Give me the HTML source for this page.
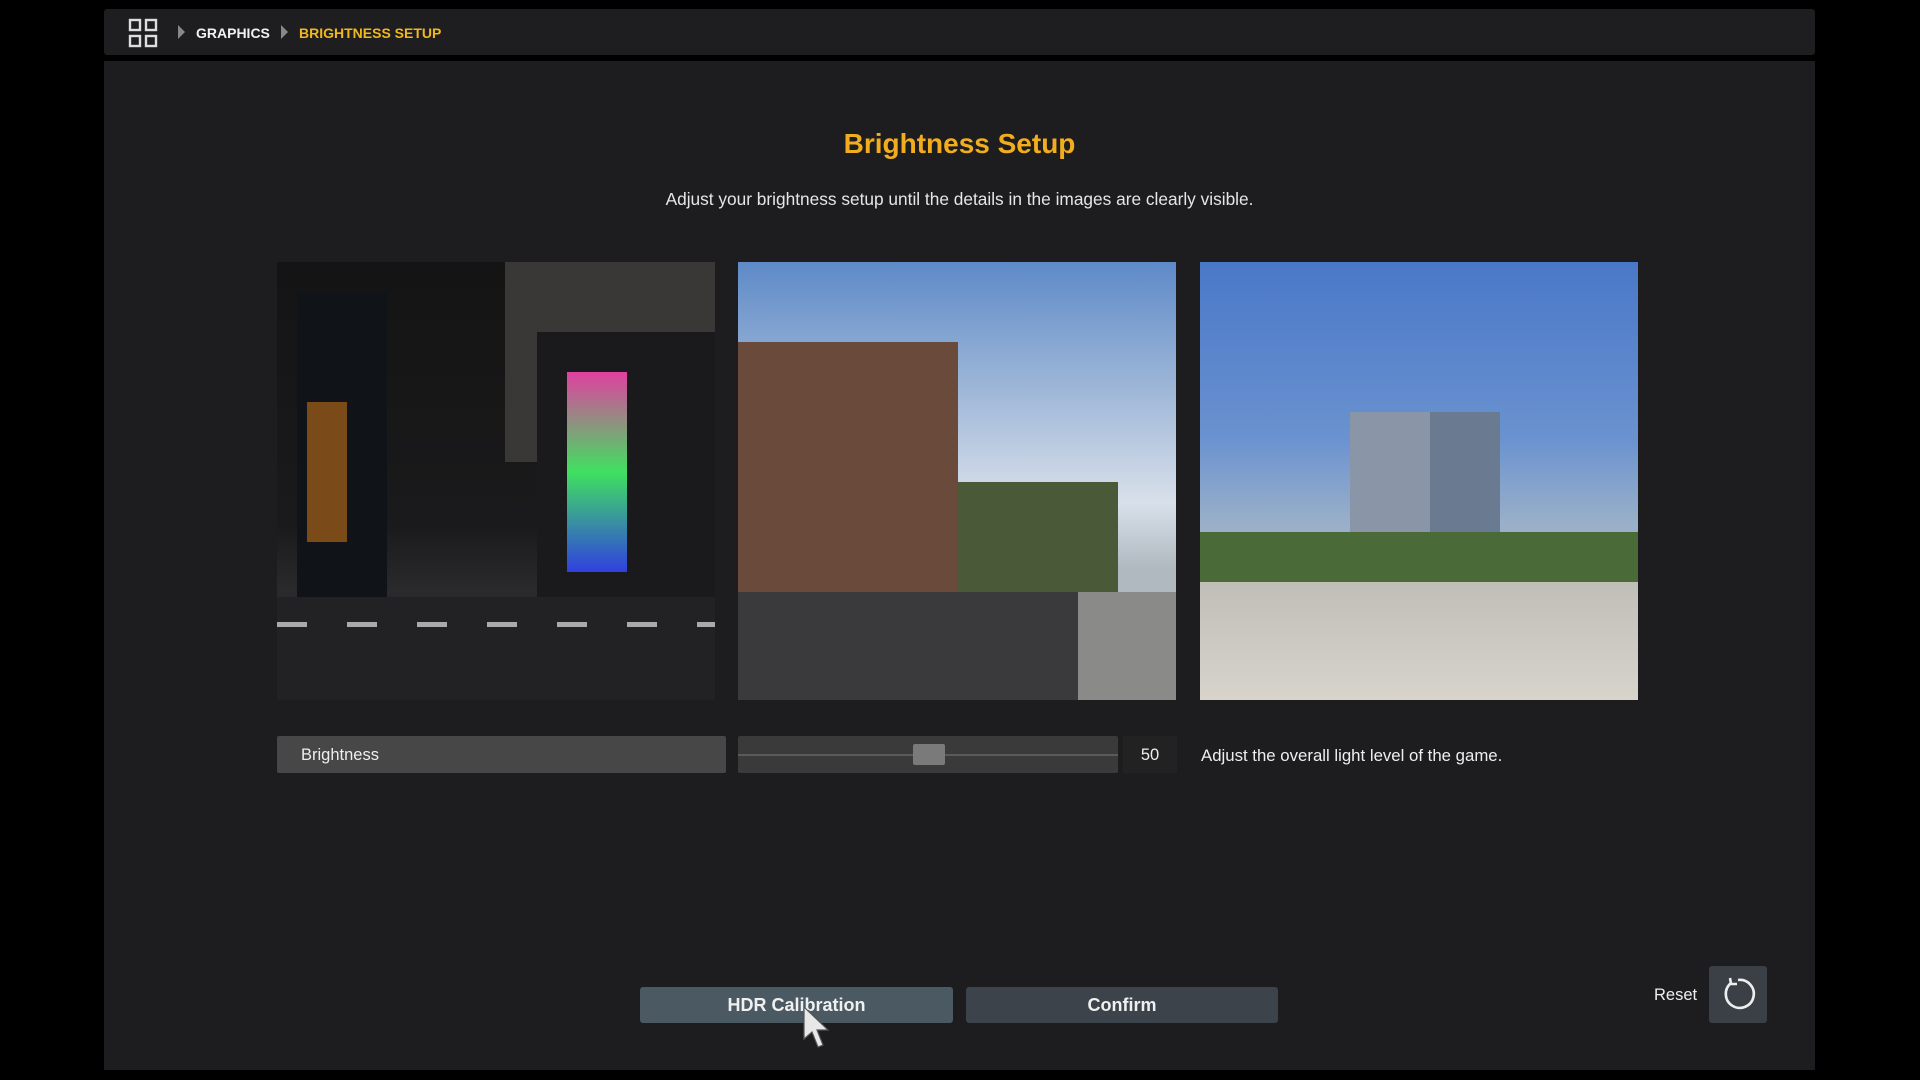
<!DOCTYPE html>
<html><head><meta charset="utf-8"><style>
*{margin:0;padding:0;box-sizing:border-box}
body{width:1920px;height:1080px;background:#000;position:relative;overflow:hidden;font-family:"Liberation Sans",sans-serif;color:#e8e8e8}
.abs{position:absolute}
.top{left:104px;top:9px;width:1711px;height:46px;background:#1e1e20;border-radius:3px}
.main{left:104px;top:61px;width:1711px;height:1009px;background:#1d1d1f}
.crumb{font-weight:bold;font-size:14px;top:25px}
.tri{width:0;height:0;border-left:7px solid #888;border-top:7px solid transparent;border-bottom:7px solid transparent;top:25px}
.img{top:262px;width:438px;height:438px;overflow:hidden}
.btn{top:987px;height:36px;border-radius:3px;font-size:18px;font-weight:bold;color:#f0f0f0;text-align:center;line-height:36px}
</style></head><body>
<div class="abs top"></div>
<svg class="abs" style="left:128px;top:18px" width="30" height="30" viewBox="0 0 30 30" fill="none" stroke="#ddd" stroke-width="2.4"><rect x="2" y="2" width="10" height="10"/><rect x="18" y="2" width="10" height="10"/><rect x="2" y="18" width="10" height="10"/><rect x="18" y="18" width="10" height="10"/></svg>
<div class="abs tri" style="left:178px"></div>
<div class="abs crumb" style="left:196px;color:#f2f2f2">GRAPHICS</div>
<div class="abs tri" style="left:281px"></div>
<div class="abs crumb" style="left:299px;color:#f2b71e">BRIGHTNESS SETUP</div>
<div class="abs main"></div>
<div class="abs" style="left:104px;width:1711px;top:128px;text-align:center;font-size:28px;font-weight:bold;color:#f2ad1e">Brightness Setup</div>
<div class="abs" style="left:104px;width:1711px;top:189px;text-align:center;font-size:17.3px;color:#e6e6e6">Adjust your brightness setup until the details in the images are clearly visible.</div>

<div class="abs img" style="left:277px;background:linear-gradient(#141414 0%,#1a1a1c 60%,#2a2a2c 75%,#1c1c1c 100%)">
 <div class="abs" style="left:228px;top:0;width:210px;height:200px;background:#3a3836"></div>
 <div class="abs" style="left:260px;top:70px;width:178px;height:280px;background:#1a1a1c"></div>
 <div class="abs" style="left:20px;top:30px;width:90px;height:320px;background:#101418"></div>
 <div class="abs" style="left:30px;top:140px;width:40px;height:140px;background:#7a4a18"></div>
 <div class="abs" style="left:290px;top:110px;width:60px;height:200px;background:linear-gradient(#e040a0,#40e060,#3040e0)"></div>
 <div class="abs" style="left:0;top:335px;width:438px;height:103px;background:#222224"></div>
 <div class="abs" style="left:0;top:360px;width:438px;height:5px;background:repeating-linear-gradient(90deg,#aaa 0 30px,transparent 30px 70px)"></div>
</div>
<div class="abs img" style="left:738px;background:linear-gradient(#5e8ac8 0%,#a0b8d8 30%,#d8e0ea 55%,#b0b8c0 70%)">
 <div class="abs" style="left:0;top:80px;width:220px;height:260px;background:#6a4a3a"></div>
 <div class="abs" style="left:220px;top:220px;width:160px;height:110px;background:#4a5a38"></div>
 <div class="abs" style="left:0;top:330px;width:438px;height:108px;background:#3a3a3c"></div>
 <div class="abs" style="left:340px;top:330px;width:98px;height:108px;background:#8a8a88"></div>
</div>
<div class="abs img" style="left:1200px;background:linear-gradient(#4a78c8 0%,#6a92d0 40%,#9ab0c8 60%)">
 <div class="abs" style="left:150px;top:150px;width:150px;height:170px;background:#8a96a8"></div>
 <div class="abs" style="left:230px;top:150px;width:70px;height:170px;background:#6a7a90"></div>
 <div class="abs" style="left:0;top:270px;width:438px;height:60px;background:#4a6a38"></div>
 <div class="abs" style="left:0;top:320px;width:438px;height:118px;background:linear-gradient(#c0beb8,#d8d4cc)"></div>
</div>

<div class="abs" style="left:277px;top:736px;width:449px;height:37px;background:#474747;border-radius:2px;font-size:16.5px;line-height:39px;padding-left:24px;color:#eee">Brightness</div>
<div class="abs" style="left:738px;top:736px;width:380px;height:37px;background:#3a3a3a;border-radius:2px"></div>
<div class="abs" style="left:738px;top:754px;width:380px;height:2px;background:#5a5a5a"></div>
<div class="abs" style="left:913px;top:744px;width:32px;height:21px;background:#7a7a7a;border-radius:2px"></div>
<div class="abs" style="left:1123px;top:736px;width:54px;height:37px;background:#222;font-size:16.5px;line-height:39px;text-align:center;color:#eee">50</div>
<div class="abs" style="left:1201px;top:746px;font-size:16.8px;color:#eee">Adjust the overall light level of the game.</div>

<div class="abs btn" style="left:640px;width:313px;background:#4b5963">HDR Calibration</div>
<div class="abs btn" style="left:966px;width:312px;background:#3c434a">Confirm</div>
<svg class="abs" style="left:802px;top:1005px" width="30" height="45" viewBox="0 0 30 45"><path d="M2 2 L2 34 L10 27 L16 42 L21 40 L15 25 L26 25 Z" fill="#e8e8e8" stroke="#555" stroke-width="1.2"/></svg>
<div class="abs" style="left:1654px;top:986px;font-size:16.5px;color:#eee">Reset</div>
<div class="abs" style="left:1709px;top:966px;width:58px;height:57px;background:#3b4046;border-radius:3px"></div>
<svg class="abs" style="left:1719px;top:975px" width="38" height="38" viewBox="0 0 38 38" fill="none" stroke="#eee" stroke-width="2.6"><path d="M12 8 A14 14 0 1 0 19 5"/><path d="M11 3 L12 9 L18 9"/></svg>
</body></html>
